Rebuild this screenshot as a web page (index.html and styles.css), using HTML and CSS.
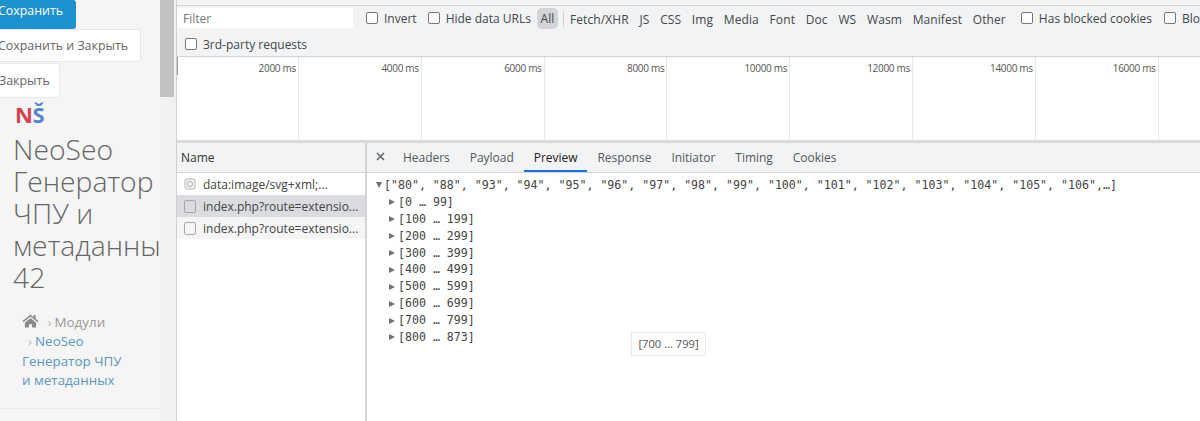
FILE: index.html
```html
<!DOCTYPE html>
<html lang="ru">
<head>
<meta charset="utf-8">
<title>DevTools</title>
<link rel="stylesheet" href="styles.css">
</head>
<body>
<div class="page">
  <aside class="side">
    <div class="btn btn-primary">Сохранить</div>
    <div class="btn btn-wide">Сохранить и Закрыть</div>
    <div class="btn btn-close">Закрыть</div>
    <div class="logo"><span class="logo-n">N</span><span class="logo-s">Š</span></div>
    <h1 class="title">NeoSeo Генератор ЧПУ и метаданных 42</h1>
    <div class="crumbs">
      <svg class="home" viewBox="0 0 18 15" width="17" height="14"><path fill="#8a8a8a" d="M9 0.5 0.5 7.6l1 1.2L9 2.6l7.5 6.2 1-1.2-3-2.5V1.2h-2.2v2.3zM3 9.4V14.5h4.3v-3.6h3.4v3.6H15V9.4L9 4.4z"/></svg>
      <span class="sep first">›</span><span class="crumb-grey">Модули</span><br>
      <span class="sep second">›</span><span class="crumb-link">NeoSeo<br>Генератор ЧПУ<br>и метаданных</span>
    </div>
    <div class="side-rule"></div>
  </aside>
  <div class="scrollbar"><div class="thumb"></div></div>
  <main class="dev">
    <div class="top-strip"></div>
    <div class="toolbar">
      <div class="row row-a">
        <div class="filter">Filter</div>
        <label class="check c-invert"><i class="box"></i>Invert</label>
        <label class="check c-hide"><i class="box"></i>Hide data URLs</label>
        <span class="all">All</span>
        <span class="divider"></span>
        <div class="types">
          <span>Fetch/XHR</span><span>JS</span><span>CSS</span><span>Img</span><span>Media</span><span>Font</span><span>Doc</span><span>WS</span><span>Wasm</span><span>Manifest</span><span>Other</span>
        </div>
        <label class="check c-blocked"><i class="box"></i>Has blocked cookies</label>
        <label class="check c-blo"><i class="box"></i>Blocked Requests</label>
      </div>
      <div class="row row-b">
        <label class="check c-third"><i class="box"></i>3rd-party requests</label>
      </div>
    </div>
    <div class="timeline">
      <div class="tick">2000 ms</div><div class="tick">4000 ms</div><div class="tick">6000 ms</div><div class="tick">8000 ms</div><div class="tick">10000 ms</div><div class="tick">12000 ms</div><div class="tick">14000 ms</div><div class="tick">16000 ms</div>
    </div>
    <div class="split">
      <section class="names">
        <div class="names-head">Name</div>
        <div class="req"><svg class="svg-ico" viewBox="0 0 12 12" width="12" height="12"><rect x="1" y="1" width="10" height="10" rx="2" fill="#f2f2f2" stroke="#b5b5b5"/><circle cx="6" cy="6" r="2.6" fill="none" stroke="#b5b5b5"/></svg><span class="req-text">data:image/svg+xml;...</span></div>
        <div class="req req-sel"><i class="doc"></i><span class="req-text">index.php?route=extensio...</span></div>
        <div class="req req-alt"><i class="doc"></i><span class="req-text">index.php?route=extensio...</span></div>
      </section>
      <section class="detail">
        <div class="tabs">
          <svg class="close" viewBox="0 0 9 9" width="9" height="9"><path d="M1 1l7 7M8 1L1 8" stroke="#5f6368" stroke-width="1.5"/></svg>
          <span class="tab">Headers</span><span class="tab">Payload</span><span class="tab tab-on">Preview</span><span class="tab">Response</span><span class="tab">Initiator</span><span class="tab">Timing</span><span class="tab">Cookies</span>
        </div>
        <div class="json">
          <div class="line root"><i class="tri-down"></i><span>["80", "88", "93", "94", "95", "96", "97", "98", "99", "100", "101", "102", "103", "104", "105", "106",…]</span></div>
          <div class="line"><i class="tri"></i><span>[0 … 99]</span></div>
          <div class="line"><i class="tri"></i><span>[100 … 199]</span></div>
          <div class="line"><i class="tri"></i><span>[200 … 299]</span></div>
          <div class="line"><i class="tri"></i><span>[300 … 399]</span></div>
          <div class="line"><i class="tri"></i><span>[400 … 499]</span></div>
          <div class="line"><i class="tri"></i><span>[500 … 599]</span></div>
          <div class="line"><i class="tri"></i><span>[600 … 699]</span></div>
          <div class="line"><i class="tri"></i><span>[700 … 799]</span></div>
          <div class="line"><i class="tri"></i><span>[800 … 873]</span></div>
        </div>
        <div class="tooltip">[700 … 799]</div>
      </section>
    </div>
  </main>
</div>
</body>
</html>
```
FILE: styles.css
```css
* { box-sizing: border-box; }
html, body { margin: 0; padding: 0; height: 421px; overflow: hidden; background: #fff; }
.page { display: flex; width: 1200px; height: 421px; font-family: "Open Sans", sans-serif; overflow: hidden; }

.side { width: 160px; flex: none; background: #f5f5f5; overflow: hidden; position: relative; }
.btn { font-size: 12.4px; line-height: 18px; border-radius: 3px; white-space: nowrap; }
.btn-primary { width: 78px; height: 29px; background: #1e91cf; color: #fff; margin-left: -2px; padding: 2px 0 0 0; }
.btn-wide { width: 147px; height: 33px; margin: 0 0 1px -6px; padding: 7px 0 0 3px; background: #fff; border: 1px solid #e8e8e8; color: #666; }
.btn-close { width: 66px; height: 35px; margin: 0 0 0 -6px; padding: 8px 0 0 4px; background: #fff; border: 1px solid #e8e8e8; color: #666; }
.logo { height: 27px; margin-left: 15px; margin-top: 1px; font-size: 22px; line-height: 30px; font-weight: 700; letter-spacing: -0.5px; }
.logo-n { color: #d3434d; }
.logo-s { color: #5585d0; }
.title { margin: 7px 0 0 13px; width: 170px; font-size: 28.3px; line-height: 32px; font-weight: 300; color: #666; }
.crumbs { margin: 20px 0 0 22px; font-size: 13.4px; line-height: 19.4px; color: #999; white-space: nowrap; }
.home { vertical-align: -1px; margin-right: 1px; }
.sep { color: #bbb; margin: 0 3px 0 3px; }
.first { margin-left: 4px; }
.second { margin-left: 6px; }
.crumb-link { color: #5b97bd; }
.side-rule { height: 1px; background: #eaeaea; margin-top: 17px; }

.scrollbar { width: 16px; flex: none; background: #f1f1f1; }
.thumb { width: 14px; height: 97px; background: #c1c1c1; }

.dev { flex: 1; min-width: 0; border-left: 1px solid #cfd0d2; font-family: "Open Sans", sans-serif; font-size: 12px; color: #44474b; overflow: hidden; }
.top-strip { height: 6px; background: #f1f3f4; border-bottom: 1px solid #d2d3d5; }
.toolbar { height: 51px; background: #f1f3f4; border-bottom: 1px solid #d2d3d5; }
.row { display: flex; align-items: center; white-space: nowrap; }
.row-a { height: 26px; }
.row-b { height: 24px; }
.filter { width: 176px; height: 20px; margin: -2px 0 0 0; background: #fff; color: #777; padding-left: 6px; line-height: 21px; flex: none; }
.check { display: flex; align-items: center; flex: none; letter-spacing: 0; }
.box { width: 12px; height: 12px; border: 1px solid #777; border-radius: 2px; background: #fff; margin-right: 6px; flex: none; }
.c-invert { margin-left: 13px; margin-top: -2px; }
.c-hide { margin-left: 11px; margin-top: -2px; }
.c-third { margin-left: 8px; }
.all { width: 21px; height: 21px; margin: -1px 0 0 6px; border-radius: 5px; background: #d2d4d7; text-align: center; line-height: 21px; flex: none; }
.divider { width: 1px; height: 16px; background: #cfd0d2; margin-left: 5px; flex: none; }
.types { display: flex; gap: 10.7px; margin-left: 6px; letter-spacing: 0.1px; flex: none; }
.c-blocked { margin-left: 15px; margin-top: -2px; }
.c-blo { margin-left: 12px; margin-top: -2px; }

.timeline { display: flex; height: 86px; background: #fff; border-bottom: 3px solid #d8d9db; position: relative; }
.timeline::before { content: ""; position: absolute; left: -1px; top: 0; width: 2px; height: 18px; background: #9a9a9a; }
.tick { width: 122.8px; flex: none; height: 100%; border-right: 1px solid #e8e8e8; text-align: right; padding: 4px 2px 0 0; font-size: 10px; line-height: 15px; color: #555; letter-spacing: -0.3px; }
.tick:first-child { width: 122px; }

.split { display: flex; height: 278px; }
.names { width: 190px; flex: none; border-right: 2px solid #d3d4d6; }
.names-head { height: 30px; line-height: 30px; padding-left: 4px; background: #f1f3f4; border-bottom: 1px solid #d2d3d5; color: #333; }
.req { height: 22px; display: flex; align-items: center; padding-left: 7px; color: #444; white-space: nowrap; }
.req-sel { background: #dadce0; }
.req-alt { background: #f5f5f5; }
.req-text { margin-left: 7px; }
.doc { width: 12px; height: 13px; border: 1px solid #a8a8a8; border-radius: 2px; background: transparent; flex: none; }
.svg-ico { flex: none; }

.detail { flex: 1; position: relative; min-width: 0; }
.tabs { display: flex; height: 30px; align-items: center; background: #f1f3f4; border-bottom: 1px solid #d2d3d5; padding-left: 9px; color: #54575b; }
.close { margin-right: 8px; margin-top: -2px; }
.tab { height: 29px; line-height: 29px; padding: 0 10px; letter-spacing: -0.03px; }
.tab-on { color: #202124; border-bottom: 2px solid #1a73e8; }
.json { padding-top: 4px; font-family: "DejaVu Sans Mono", monospace; font-size: 11.6px; color: #444; }
.line { height: 16.9px; line-height: 17px; display: flex; align-items: center; padding-left: 22px; white-space: nowrap; }
.root { padding-left: 9px; }
.tri { width: 0; height: 0; border-left: 6px solid #727272; border-top: 3.5px solid transparent; border-bottom: 3.5px solid transparent; margin-right: 3px; flex: none; }
.tri-down { width: 0; height: 0; border-top: 6px solid #727272; border-left: 3.5px solid transparent; border-right: 3.5px solid transparent; margin-right: 2px; flex: none; }
.tooltip { position: absolute; left: 264px; top: 189px; width: 75px; height: 24px; background: #fff; border: 1px solid #e6e6e6; font-size: 11.2px; line-height: 22px; text-align: center; color: #555; }
```
